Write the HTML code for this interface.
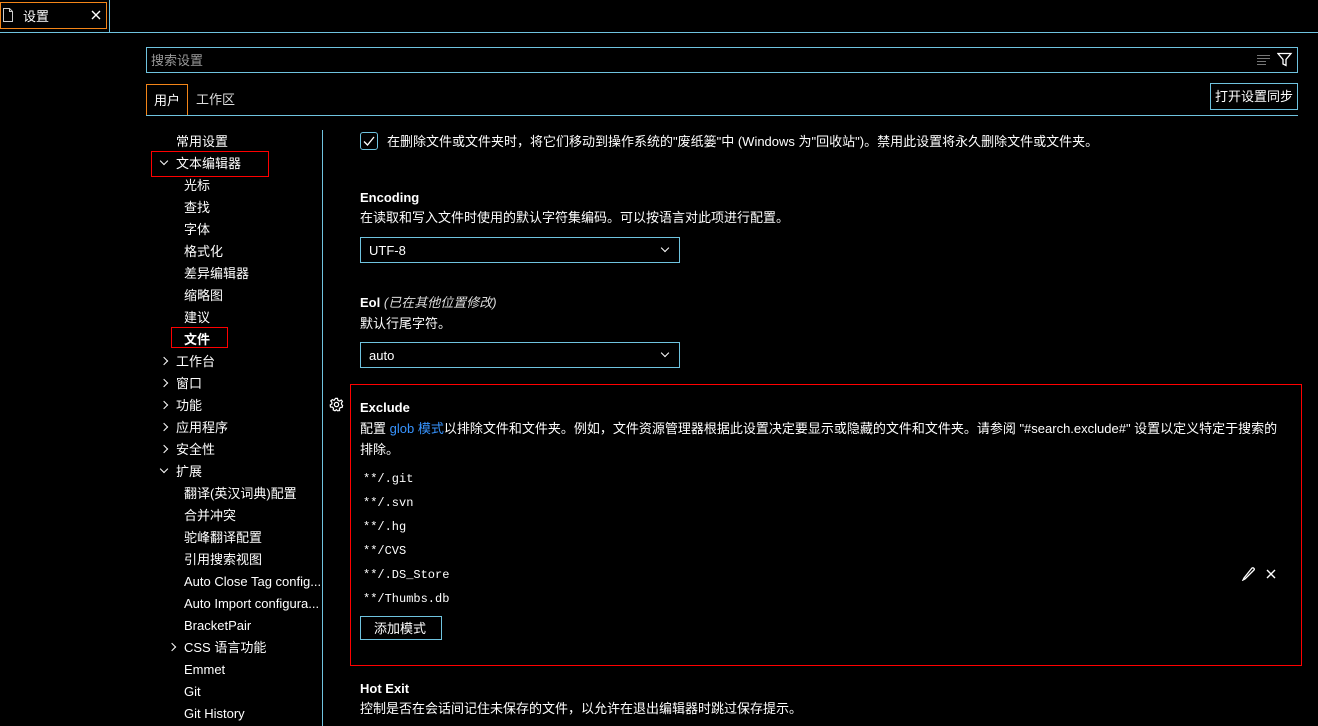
<!DOCTYPE html>
<html><head><meta charset="utf-8"><style>
*{margin:0;padding:0;box-sizing:border-box}
body{width:1318px;height:726px;background:#000;color:#fff;font-family:"Liberation Sans","Noto Sans CJK SC",sans-serif;font-size:13px;position:relative;overflow:hidden}
.a{position:absolute;white-space:nowrap;line-height:18px;margin-top:1px}
.cy{border:1px solid #6fc3df}
.mono{font-family:"Liberation Mono","DejaVu Sans Mono",monospace;font-size:12px}
.chev{position:absolute;width:6px;height:6px;border-right:1.3px solid #fff;border-bottom:1.3px solid #fff}
.r{transform:rotate(-45deg)}
.d{transform:rotate(45deg)}
</style></head><body>
<!-- tab bar -->
<div style="position:absolute;left:0;top:32px;width:1318px;height:1px;background:#6fc3df"></div>
<div style="position:absolute;left:109px;top:0;width:1px;height:32px;background:#6fc3df"></div>
<div style="position:absolute;left:0;top:2px;width:107px;height:27px;border:1px solid #f38518"></div>
<svg style="position:absolute;left:3px;top:8px" width="10" height="14" viewBox="0 0 10 14"><path d="M0.5 0.5H6.5L9.5 3.5V13.5H0.5Z M6.5 0.5V3.5H9.5" fill="none" stroke="#ccc"/></svg>
<div class="a" style="left:23px;top:7px">设置</div>
<svg style="position:absolute;left:91px;top:10px" width="10" height="10"><path d="M1 1L9 9M9 1L1 9" stroke="#fff" stroke-width="1.4"/></svg>
<!-- search -->
<div class="cy" style="position:absolute;left:146px;top:47px;width:1152px;height:26px"></div>
<div class="a" style="left:151px;top:51px;color:#9a9a9a">搜索设置</div>
<svg style="position:absolute;left:1257px;top:54px" width="16" height="12"><path d="M0 1.5H13M0 4.5H13M0 7.5H9M0 10.5H9" stroke="#777"/></svg>
<svg style="position:absolute;left:1277px;top:52px" width="16" height="15"><path d="M1 1.5H14L9 7.5V13.5L6 12V7.5Z" fill="none" stroke="#fff" stroke-width="1.3"/></svg>
<!-- tabs -->
<div style="position:absolute;left:146px;top:84px;width:42px;height:32px;border:1px solid #f38518"></div>
<div class="a" style="left:154px;top:91px">用户</div>
<div class="a" style="left:196px;top:90px;color:#ddd">工作区</div>
<div style="position:absolute;left:146px;top:115px;width:1152px;height:1px;background:#6fc3df"></div>
<div class="cy" style="position:absolute;left:1210px;top:83px;width:88px;height:27px"></div>
<div class="a" style="left:1215px;top:87px">打开设置同步</div>
<!-- sidebar -->
<div style="position:absolute;left:322px;top:130px;width:1px;height:596px;background:#6fc3df"></div>
<div style="position:absolute;left:151px;top:151px;width:118px;height:26px;border:1px solid #f00"></div>
<div style="position:absolute;left:171px;top:327px;width:57px;height:21px;border:1px solid #f00"></div>
<div class="a" style="left:176px;top:132px">常用设置</div>
<div class="chev d" style="left:161px;top:158px"></div><div class="a" style="left:176px;top:154px">文本编辑器</div>
<div class="a" style="left:184px;top:176px">光标</div>
<div class="a" style="left:184px;top:198px">查找</div>
<div class="a" style="left:184px;top:220px">字体</div>
<div class="a" style="left:184px;top:242px">格式化</div>
<div class="a" style="left:184px;top:264px">差异编辑器</div>
<div class="a" style="left:184px;top:286px">缩略图</div>
<div class="a" style="left:184px;top:308px">建议</div>
<div class="a" style="left:184px;top:330px;font-weight:bold">文件</div>
<div class="chev r" style="left:161px;top:358px"></div><div class="a" style="left:176px;top:352px">工作台</div>
<div class="chev r" style="left:161px;top:380px"></div><div class="a" style="left:176px;top:374px">窗口</div>
<div class="chev r" style="left:161px;top:402px"></div><div class="a" style="left:176px;top:396px">功能</div>
<div class="chev r" style="left:161px;top:424px"></div><div class="a" style="left:176px;top:418px">应用程序</div>
<div class="chev r" style="left:161px;top:446px"></div><div class="a" style="left:176px;top:440px">安全性</div>
<div class="chev d" style="left:161px;top:466px"></div><div class="a" style="left:176px;top:462px">扩展</div>
<div class="a" style="left:184px;top:484px">翻译(英汉词典)配置</div>
<div class="a" style="left:184px;top:506px">合并冲突</div>
<div class="a" style="left:184px;top:528px">驼峰翻译配置</div>
<div class="a" style="left:184px;top:550px">引用搜索视图</div>
<div class="a" style="left:184px;top:572px">Auto Close Tag config...</div>
<div class="a" style="left:184px;top:594px">Auto Import configura...</div>
<div class="a" style="left:184px;top:616px">BracketPair</div>
<div class="chev r" style="left:169px;top:644px"></div><div class="a" style="left:184px;top:638px">CSS 语言功能</div>
<div class="a" style="left:184px;top:660px">Emmet</div>
<div class="a" style="left:184px;top:682px">Git</div>
<div class="a" style="left:184px;top:704px">Git History</div>
<!-- content -->
<div style="position:absolute;left:360px;top:132px;width:18px;height:18px;border:1px solid #6fc3df;border-radius:3px"></div>
<svg style="position:absolute;left:362px;top:134px" width="14" height="14"><path d="M2 7.5L5.5 11L12 3" fill="none" stroke="#fff" stroke-width="1.3"/></svg>
<div class="a" style="left:387px;top:132px">在删除文件或文件夹时，将它们移动到操作系统的"废纸篓"中 (Windows 为"回收站")。禁用此设置将永久删除文件或文件夹。</div>
<div class="a" style="left:360px;top:188px;font-weight:bold">Encoding</div>
<div class="a" style="left:360px;top:208px">在读取和写入文件时使用的默认字符集编码。可以按语言对此项进行配置。</div>
<div class="cy" style="position:absolute;left:360px;top:237px;width:320px;height:26px"></div>
<div class="a" style="left:369px;top:241px">UTF-8</div>
<div class="chev d" style="left:662px;top:245px"></div>
<div class="a" style="left:360px;top:293px"><b>Eol</b> <i style="color:#ddd">(已在其他位置修改)</i></div>
<div class="a" style="left:360px;top:314px">默认行尾字符。</div>
<div class="cy" style="position:absolute;left:360px;top:342px;width:320px;height:26px"></div>
<div class="a" style="left:369px;top:346px">auto</div>
<div class="chev d" style="left:662px;top:350px"></div>
<!-- exclude -->
<div style="position:absolute;left:350px;top:384px;width:952px;height:282px;border:1px solid #f00"></div>
<svg style="position:absolute;left:329px;top:397px" width="15" height="15" viewBox="0 0 16 16"><circle cx="8" cy="8" r="2.3" fill="none" stroke="#fff" stroke-width="1.3"/><path d="M7 1.5H9L9.5 3.5L11.2 4.3L13 3.2L14.3 4.7L13.2 6.5L13.6 8.2L14.5 9L14 11L12 11.3L11 12.8L11.3 14.5L9 14.7L8 13.5L6.4 14.7L4.5 13.8L4.8 12L3.5 10.8L1.6 10.7L1.3 8.5L3 7.5L3.1 5.7L1.9 4.2L3.6 2.8L5.3 3.6Z" fill="none" stroke="#fff" stroke-width="1.3"/></svg>
<div class="a" style="left:360px;top:398px;font-weight:bold">Exclude</div>
<div class="a" style="left:360px;top:419px">配置 <span style="color:#3794ff">glob 模式</span>以排除文件和文件夹。例如，文件资源管理器根据此设置决定要显示或隐藏的文件和文件夹。请参阅 "#search.exclude#" 设置以定义特定于搜索的</div>
<div class="a" style="left:360px;top:440px">排除。</div>
<div class="a mono" style="left:363px;top:469px">**/.git</div>
<div class="a mono" style="left:363px;top:493px">**/.svn</div>
<div class="a mono" style="left:363px;top:517px">**/.hg</div>
<div class="a mono" style="left:363px;top:541px">**/CVS</div>
<div class="a mono" style="left:363px;top:565px">**/.DS_Store</div>
<div class="a mono" style="left:363px;top:589px">**/Thumbs.db</div>
<svg style="position:absolute;left:1241px;top:566px" width="15" height="15"><path d="M3 12L2 14L4 13L13 4C13.8 3.2 12.8 1.2 11 2Z" fill="none" stroke="#fff" stroke-width="1.3"/></svg>
<svg style="position:absolute;left:1266px;top:569px" width="10" height="10"><path d="M1 1L9 9M9 1L1 9" stroke="#fff" stroke-width="1.4"/></svg>
<div class="cy" style="position:absolute;left:360px;top:616px;width:82px;height:24px"></div>
<div class="a" style="left:374px;top:619px">添加模式</div>
<div class="a" style="left:360px;top:679px;font-weight:bold">Hot Exit</div>
<div class="a" style="left:360px;top:699px">控制是否在会话间记住未保存的文件，以允许在退出编辑器时跳过保存提示。</div>
</body></html>
